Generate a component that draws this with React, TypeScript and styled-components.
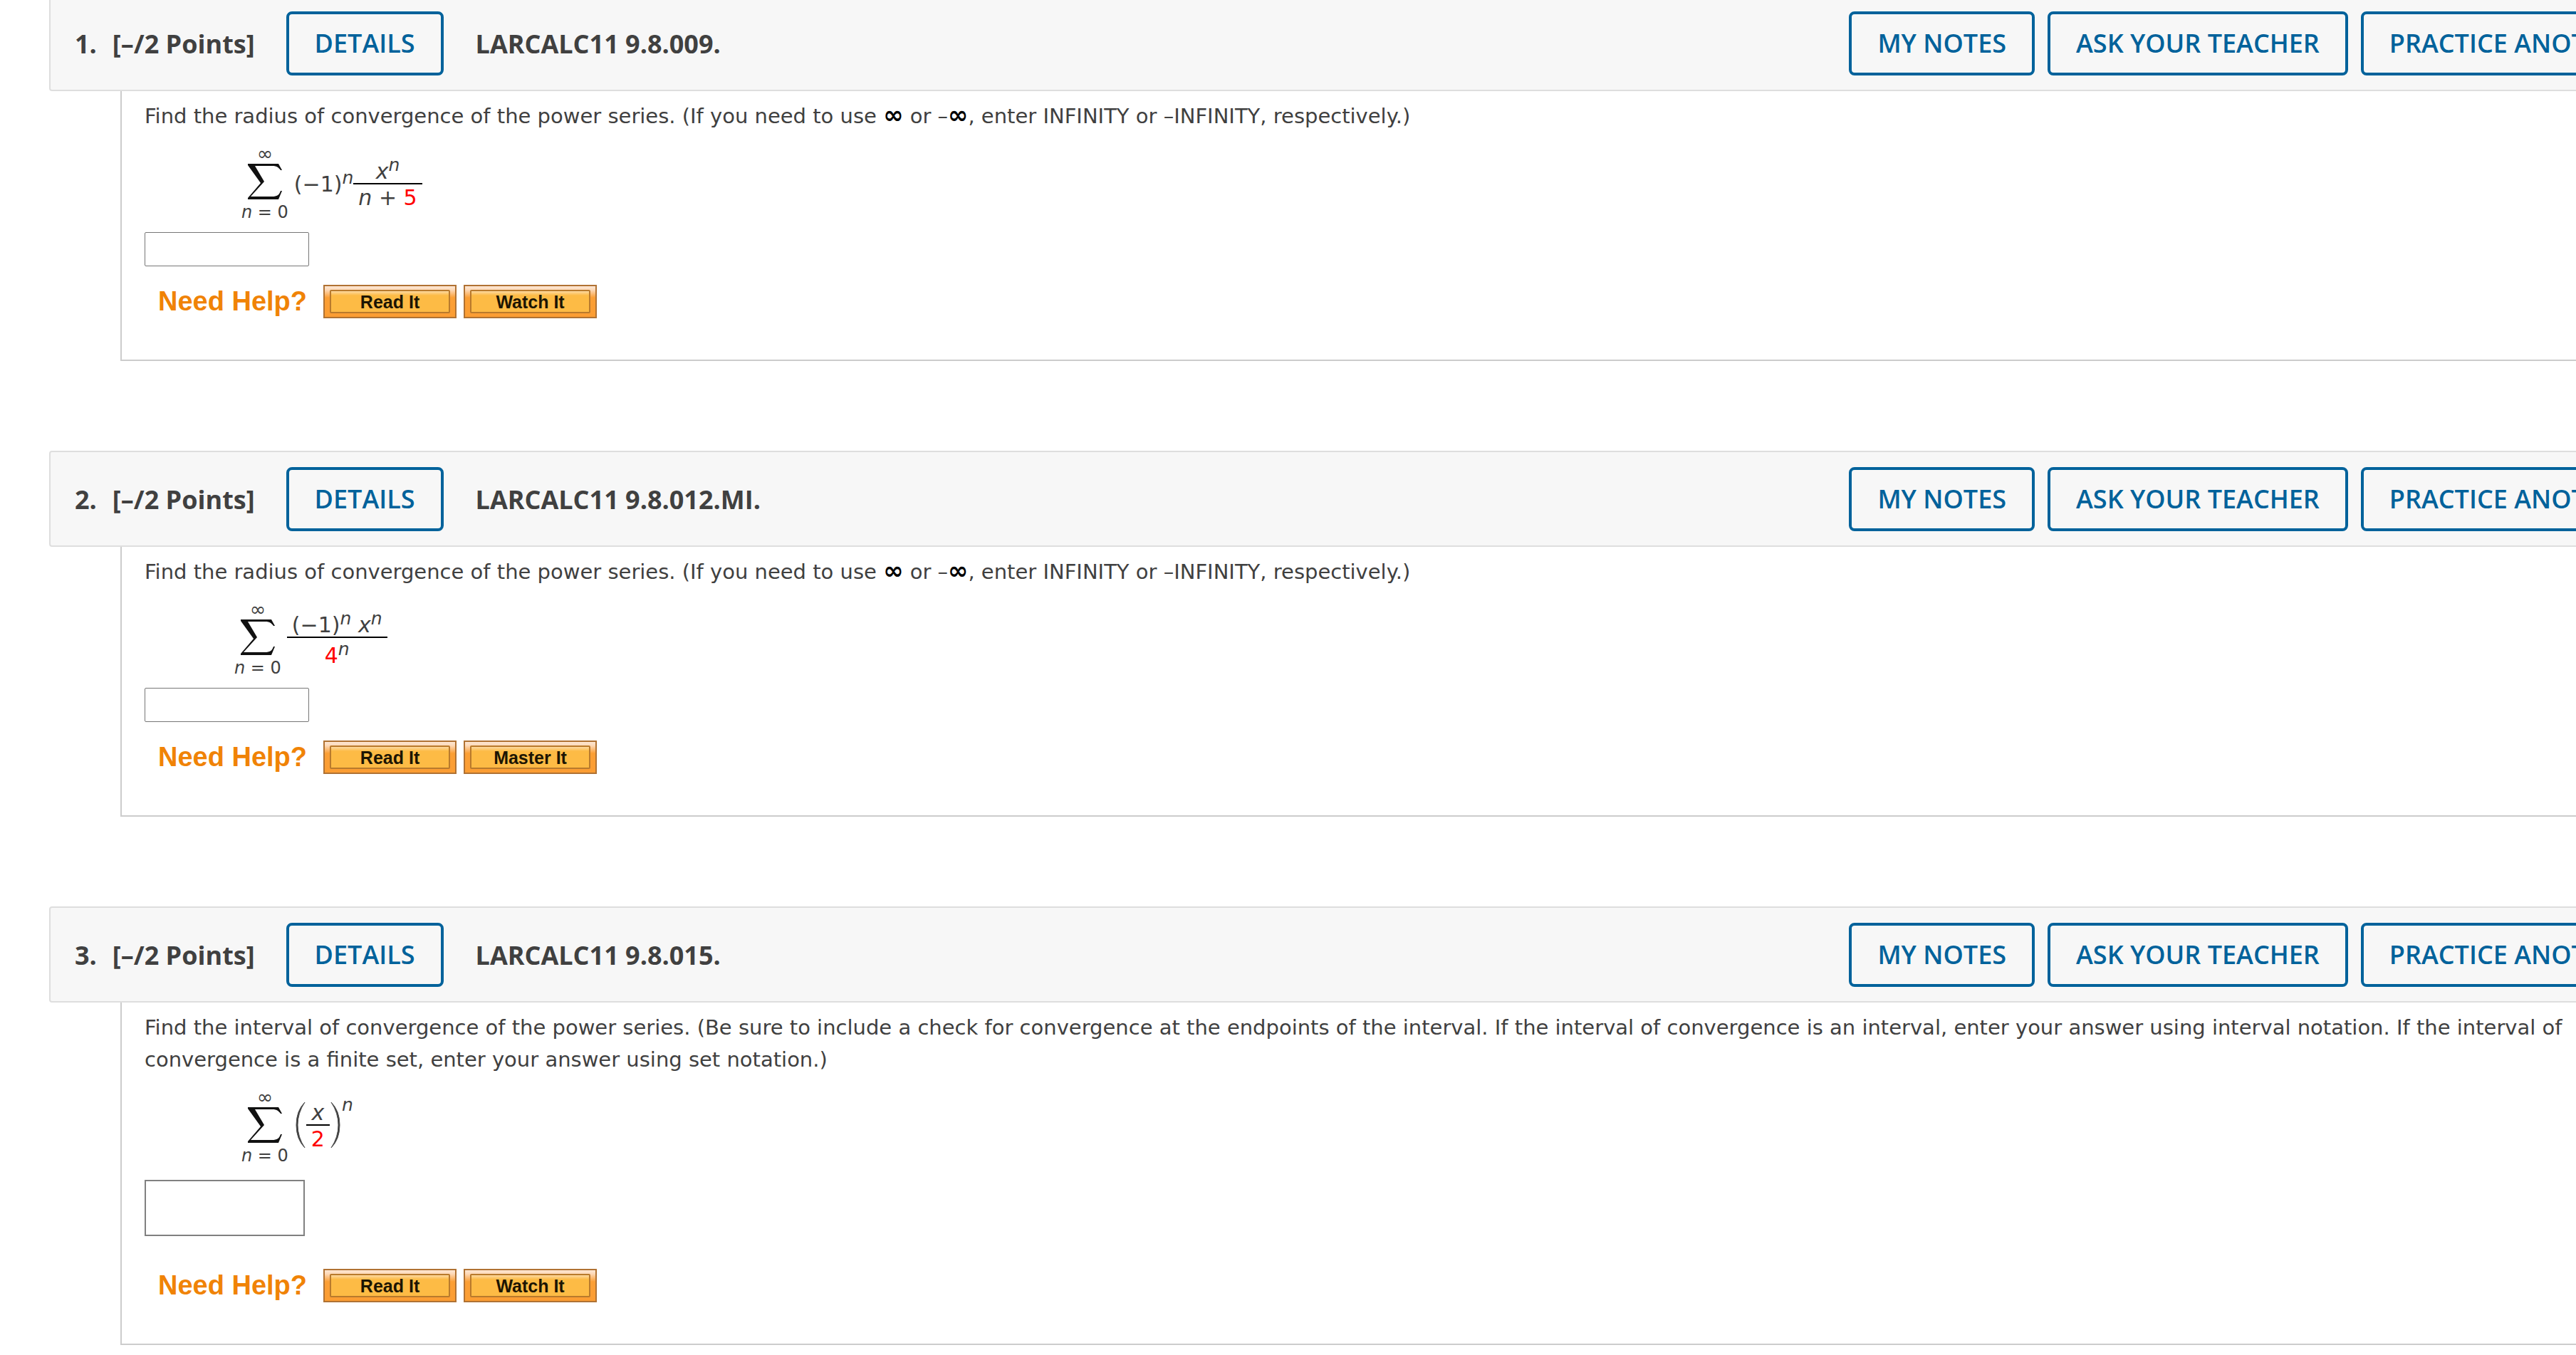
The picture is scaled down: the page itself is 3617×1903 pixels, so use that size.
import React from "react";
import styled, { createGlobalStyle, css } from "styled-components";

const mathFont = css`
  font-family: Verdana, "DejaVu Sans", sans-serif;
`;

const GlobalStyle = createGlobalStyle`
  *, *::before, *::after { box-sizing: border-box; }
  html, body { margin: 0; background: #fff; overflow: hidden; }
  body { color: #404040; ${mathFont} font-size: 29px; line-height: 45px; }
`;

const Viewport = styled.main`
  overflow: hidden;
`;

const Sheet = styled.div`
  width: calc(100% + 160px);
  margin-top: -7px;
  padding: 0 0 14px 69px;
  display: flex;
  flex-direction: column;
  gap: 126px;
`;

const Question = styled.section``;

const Header = styled.header`
  display: flex;
  align-items: center;
  padding: 21px 34px 20px 34px;
  background: #f7f7f7;
  border: 2px solid #dedede;
  border-radius: 4px;
  font-family: "Open Sans", sans-serif;
  font-size: 36px;
`;

const Points = styled.h2`
  display: flex;
  gap: 22px;
  margin: 0 44px 0 0;
  font-size: inherit;
  font-weight: 700;
  white-space: nowrap;
`;

const Source = styled.span`
  margin-left: 45px;
  font-weight: 700;
  white-space: nowrap;
`;

const OutlineButton = styled.button`
  height: 90px;
  padding: 0 36px;
  border: 4px solid #00629b;
  border-radius: 8px;
  background: transparent;
  color: #00629b;
  font: 600 36px/48px "Open Sans", sans-serif;
  white-space: nowrap;
  cursor: pointer;
`;

const Actions = styled.div`
  display: flex;
  gap: 18px;
  margin-left: auto;
`;

const Body = styled.div`
  margin-left: 100px;
  padding: 13px 34px 58px 32px;
  border-left: 2px solid #ccc;
  border-bottom: 2px solid #ccc;
`;

const Prompt = styled.p`
  margin: 0;
`;

const Infinity = styled.span`
  color: #000;
  font-size: 34px;
  font-weight: 700;
  line-height: 0;
`;

const Formula = styled.div<{ $indent: number }>`
  display: flex;
  align-items: center;
  margin: 18px 0 0 ${(p) => p.$indent}px;
  font-size: 30px;
`;

const SumColumn = styled.div`
  display: flex;
  flex-direction: column;
  align-items: center;
  margin-right: 8px;
  font-size: 24px;
  white-space: nowrap;
`;

const UpperLimit = styled.span`
  font-size: 27px;
  line-height: 24px;
`;

const LowerLimit = styled.span`
  line-height: 28px;
`;

const SigmaArt = styled.svg`
  width: 48px;
  height: 50px;
  margin: 2px 0 4px;
`;

const Var = styled.i``;

const Exponent = styled.sup`
  font-size: 25px;
  font-style: italic;
  line-height: 0;
  vertical-align: 11px;
`;

const Fraction = styled.span`
  display: flex;
  flex-direction: column;
  text-align: center;
  white-space: nowrap;
`;

const Numerator = styled.span<{ $raised?: boolean }>`
  padding: ${(p) => (p.$raised ? "6px 7px 0" : "0 6px")};
  border-bottom: 2px solid #000;
  line-height: 32px;
`;

const Denominator = styled.span<{ $raised?: boolean }>`
  padding: ${(p) => (p.$raised ? "6px 7px 0" : "0 7px")};
  line-height: 38px;
`;

const Given = styled.span`
  color: #f00;
`;

const Group = styled.span`
  display: flex;
  align-items: flex-start;
`;

const ParenArt = styled.svg`
  width: 15px;
  height: 66px;
  margin: 0 1px;
`;

const OuterExponent = styled.i`
  font-size: 25px;
  line-height: 10px;
`;

const Answer = styled.input<{ $pad?: boolean }>`
  display: block;
  margin: ${(p) => (p.$pad ? "20px 0 46px" : "14px 0 26px")};
  width: ${(p) => (p.$pad ? 225 : 231)}px;
  height: ${(p) => (p.$pad ? 79 : 48)}px;
  padding: 0 8px;
  border: ${(p) => (p.$pad ? "2px solid #808080" : "1px solid #767676")};
  border-radius: ${(p) => (p.$pad ? 0 : 2)}px;
  background: #fff;
  color: inherit;
  font: inherit;
`;

const Help = styled.div`
  display: flex;
  align-items: center;
  gap: 10px;
  padding-left: 19px;
  font-family: Arial, "Liberation Sans", sans-serif;
`;

const HelpLabel = styled.strong`
  margin-right: 13px;
  color: #f08306;
  font-size: 38px;
`;

const HelpButton = styled.button`
  display: flex;
  width: 187px;
  height: 47px;
  padding: 5px 7px;
  border: 2px solid #b07233;
  background: linear-gradient(#fde6d2 0, #fdd9b8 5px, #fb9f35 16px, #fb9d33);
  cursor: pointer;
`;

const HelpFace = styled.span`
  flex: 1;
  border: 2px solid #b97a2c;
  border-radius: 2px;
  background: linear-gradient(#fdd9a0 0, #fdbb45 6px);
  color: #1c1503;
  font: 700 25px/31px Arial, "Liberation Sans", sans-serif;
`;

function Sigma() {
  return (
    <SigmaArt viewBox="0 0 48 50" aria-hidden="true">
      <path
        d="M0 0H43L48 9H46C43 5 40 3 35 3H10L23 25L4 46H34C41 46 44 44 46 38H48L43 50H0V48L18 27L0 2Z"
        fill="#111"
      />
    </SigmaArt>
  );
}

function Sum() {
  return (
    <SumColumn>
      <UpperLimit>∞</UpperLimit>
      <Sigma />
      <LowerLimit>
        <Var>n</Var> = 0
      </LowerLimit>
    </SumColumn>
  );
}

function Paren({ right }: { right?: boolean }) {
  return (
    <ParenArt viewBox="0 0 15 66" aria-hidden="true">
      <path
        d={right ? "M1 1Q13 13 13 33T1 65Q11 50 11 33T1 1Z" : "M14 1Q2 13 2 33T14 65Q4 50 4 33T14 1Z"}
        fill="#333"
        stroke="#555"
      />
    </ParenArt>
  );
}

const radiusPrompt = (
  <>
    Find the radius of convergence of the power series. (If you need to use <Infinity>∞</Infinity> or –
    <Infinity>∞</Infinity>, enter INFINITY or –INFINITY, respectively.)
  </>
);

const questions = [
  {
    source: "LARCALC11 9.8.009.",
    prompt: radiusPrompt,
    indent: 136,
    help: ["Read It", "Watch It"],
    term: (
      <>
        <span>
          (−1)<Exponent>n</Exponent>
        </span>
        <Fraction>
          <Numerator $raised>
            <Var>x</Var>
            <Exponent>n</Exponent>
          </Numerator>
          <Denominator>
            <Var>n</Var> + <Given>5</Given>
          </Denominator>
        </Fraction>
      </>
    ),
  },
  {
    source: "LARCALC11 9.8.012.MI.",
    prompt: radiusPrompt,
    indent: 126,
    help: ["Read It", "Master It"],
    term: (
      <Fraction>
        <Numerator $raised>
          (−1)<Exponent>n</Exponent> <Var>x</Var>
          <Exponent>n</Exponent>
        </Numerator>
        <Denominator $raised>
          <Given>4</Given>
          <Exponent>n</Exponent>
        </Denominator>
      </Fraction>
    ),
  },
  {
    source: "LARCALC11 9.8.015.",
    prompt:
      "Find the interval of convergence of the power series. (Be sure to include a check for convergence at the endpoints of the interval. If the interval of convergence is an interval, enter your answer using interval notation. If the interval of convergence is a finite set, enter your answer using set notation.)",
    indent: 136,
    pad: true,
    help: ["Read It", "Watch It"],
    term: (
      <Group>
        <Paren />
        <Fraction>
          <Numerator>
            <Var>x</Var>
          </Numerator>
          <Denominator>
            <Given>2</Given>
          </Denominator>
        </Fraction>
        <Paren right />
        <OuterExponent>n</OuterExponent>
      </Group>
    ),
  },
];

export default function App() {
  return (
    <Viewport>
      <GlobalStyle />
      <Sheet>
        {questions.map((q, i) => (
          <Question key={q.source}>
            <Header>
              <Points>
                <span>{i + 1}.</span>
                <span>[–/2 Points]</span>
              </Points>
              <OutlineButton type="button">DETAILS</OutlineButton>
              <Source>{q.source}</Source>
              <Actions>
                <OutlineButton type="button">MY NOTES</OutlineButton>
                <OutlineButton type="button">ASK YOUR TEACHER</OutlineButton>
                <OutlineButton type="button">PRACTICE ANOTHER</OutlineButton>
              </Actions>
            </Header>
            <Body>
              <Prompt>{q.prompt}</Prompt>
              <Formula $indent={q.indent}>
                <Sum />
                {q.term}
              </Formula>
              <Answer type="text" aria-label={`Answer to question ${i + 1}`} $pad={q.pad} />
              <Help>
                <HelpLabel>Need Help?</HelpLabel>
                {q.help.map((label) => (
                  <HelpButton type="button" key={label}>
                    <HelpFace>{label}</HelpFace>
                  </HelpButton>
                ))}
              </Help>
            </Body>
          </Question>
        ))}
      </Sheet>
    </Viewport>
  );
}
